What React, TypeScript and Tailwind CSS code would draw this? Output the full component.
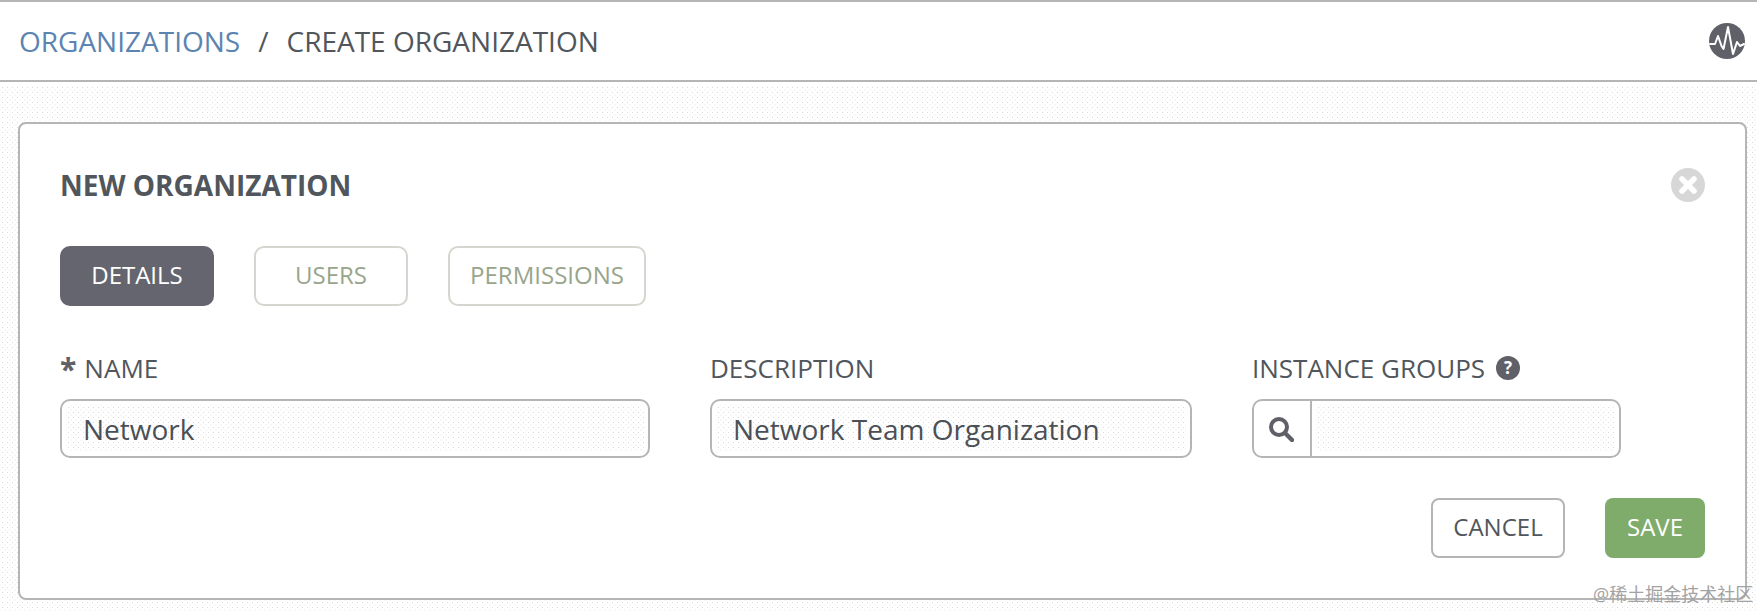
const dots =
    "bg-[radial-gradient(#d9d9d9_0.6px,transparent_0.8px),radial-gradient(#e3e3e3_0.6px,transparent_0.8px)] bg-[size:5px_5px] bg-[position:0_0,2.5px_2.5px]"
const font = { fontFamily: '"Open Sans", "Noto Sans CJK SC", sans-serif' }

function PulseIcon() {
    return (
        <svg viewBox="0 0 36 36" className="h-9 w-9 shrink-0">
            <circle cx="18" cy="18" r="18" fill="#5f6068" />
            <path
                d="M1 21h5l3-8 3.5 10 2 3L19 4l5 27 4-12 3 4 4-2"
                fill="none"
                stroke="#fff"
                strokeWidth="2"
                strokeLinejoin="round"
                strokeLinecap="round"
            />
        </svg>
    )
}

function CloseIcon() {
    return (
        <svg viewBox="0 0 34 34" className="h-[34px] w-[34px]">
            <circle cx="17" cy="17" r="17" fill="#d7d7d7" />
            <path d="M11 11l12 12M23 11L11 23" stroke="#fff" strokeWidth="5.5" strokeLinecap="round" />
        </svg>
    )
}

function SearchIcon() {
    return (
        <svg viewBox="0 0 26 26" className="h-[26px] w-[26px]">
            <circle cx="11" cy="11" r="8" fill="none" stroke="#5f6068" strokeWidth="4" />
            <path d="M17 17l7 7" stroke="#5f6068" strokeWidth="4.4" strokeLinecap="round" />
        </svg>
    )
}

function Field({ label, value, required, className }: { label: string; value: string; required?: boolean; className: string }) {
    return (
        <div className={className}>
            <label className="flex h-[38px] items-center text-[26px] text-[#50565c]">
                {required && <span className="mr-[8px] text-[30px] font-bold text-[#5f6068]">*</span>}
                {label}
            </label>
            <div className="mt-[12px] h-[59px] rounded-[10px] border-2 border-[#b5b5b5] bg-white p-[4px]">
                <div className={`flex h-full items-center rounded-md px-[17px] pt-px text-[28px] text-[#4a5056] ${dots}`}>{value}</div>
            </div>
        </div>
    )
}

export default function App() {
    return (
        <div className={`relative h-[612px] w-[1757px] overflow-hidden ${dots}`} style={font}>
            <header className="flex h-[82px] items-center justify-between border-y-2 border-[#b5b5b5] bg-white pl-[19px] pr-[12px] text-[28px]">
                <div className="flex items-center">
                    <span className="text-[#5b84b1]">ORGANIZATIONS</span>
                    <span className="mx-[18px] text-[#50565c]">/</span>
                    <span className="text-[#50565c]">CREATE ORGANIZATION</span>
                </div>
                <PulseIcon />
            </header>
            <div className="h-[4px] bg-white" />

            <section className="mx-[18px] mt-[36px] h-[478px] w-[1729px] rounded-lg border-2 border-[#b5b5b5] bg-white px-[40px]">
                <div className="mt-[41px] flex h-[40px] items-center justify-between">
                    <h1 className="text-[28px] font-bold text-[#50565c]">NEW ORGANIZATION</h1>
                    <CloseIcon />
                </div>

                <div className="mt-[41px] flex gap-[40px] text-[24px]">
                    <button className="h-[60px] w-[154px] rounded-[10px] bg-[#64656e] pb-[2px] text-white">DETAILS</button>
                    <button className="h-[60px] w-[154px] rounded-[10px] border-2 border-[#d4d6cf] pb-[2px] text-[#98a58c]">USERS</button>
                    <button className="h-[60px] w-[198px] rounded-[10px] border-2 border-[#d4d6cf] pb-[2px] text-[#98a58c]">PERMISSIONS</button>
                </div>

                <div className="mt-[43px] flex">
                    <Field label="NAME" value="Network" required className="w-[590px]" />
                    <Field label="DESCRIPTION" value="Network Team Organization" className="ml-[60px] w-[482px]" />
                    <div className="ml-[60px] w-[369px]">
                        <label className="flex h-[38px] items-center text-[26px] text-[#50565c]">
                            INSTANCE GROUPS
                            <span className="ml-[11px] flex h-6 w-6 items-center justify-center rounded-full bg-[#5f6068] text-[17px] font-bold text-white">?</span>
                        </label>
                        <div className="mt-[12px] flex h-[59px] rounded-[10px] border-2 border-[#b5b5b5] bg-white">
                            <div className="flex w-[58px] items-center justify-center border-r-2 border-[#b5b5b5] pr-[2px]">
                                <SearchIcon />
                            </div>
                            <div className="flex-1 p-[4px]">
                                <div className={`h-full rounded-md ${dots}`} />
                            </div>
                        </div>
                    </div>
                </div>

                <div className="mt-[40px] flex justify-end gap-[40px] text-[24px]">
                    <button className="h-[60px] w-[134px] rounded-lg border-2 border-[#b5b5b5] pb-[2px] text-[#50565c]">CANCEL</button>
                    <button className="h-[60px] w-[100px] rounded-lg bg-[#7fab6b] pb-[2px] text-white">SAVE</button>
                </div>
            </section>

            <span className="absolute left-[1593px] top-[581px] whitespace-nowrap text-[18px] text-[#a3a3a3]">@稀土掘金技术社区</span>
        </div>
    )
}
